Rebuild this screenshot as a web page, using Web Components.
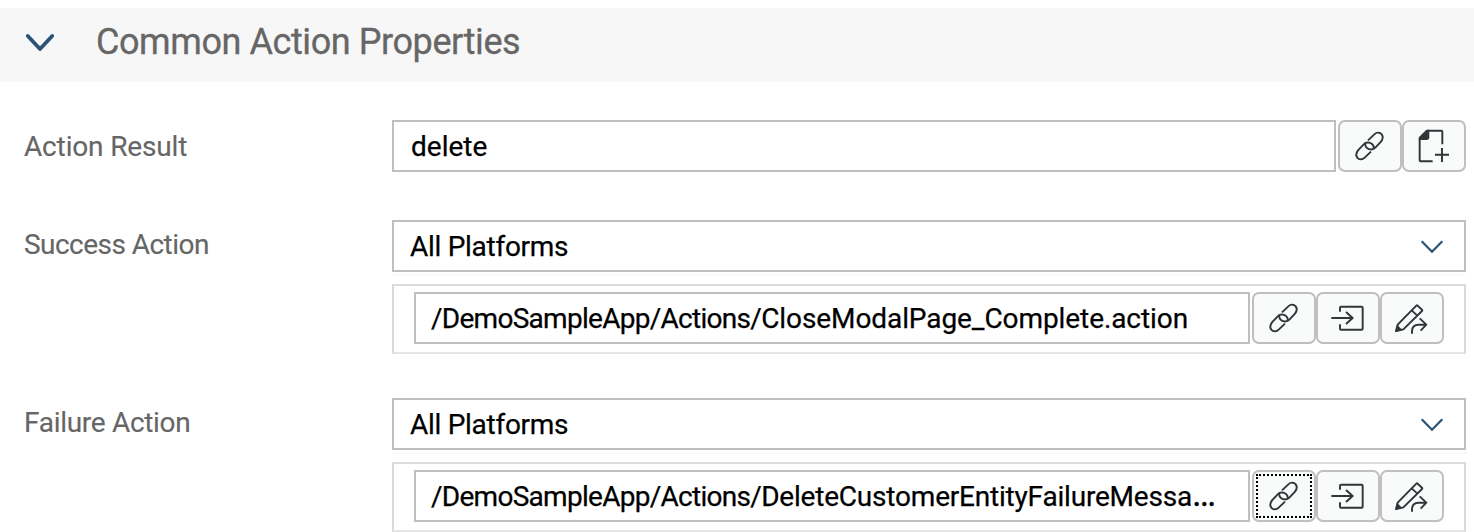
<!DOCTYPE html>
<html lang="en">
<head>
<meta charset="utf-8">
<title>Common Action Properties</title>
<style>
body{margin:0;background:#fff;font-family:Roboto,"Open Sans",sans-serif;overflow:hidden}
</style>
</head>
<body>
<property-panel></property-panel>
<script>
function define(name, html, setup) {
  const template = document.createElement('template');
  template.innerHTML = html;
  customElements.define(name, class extends HTMLElement {
    constructor() {
      super();
      this.attachShadow({mode: 'open'}).appendChild(template.content.cloneNode(true));
    }
    connectedCallback() { if (setup) setup(this, this.shadowRoot); }
  });
}

// Button icons share a 192 x 156 grid, three units per pixel.
const icons = {
  link: '<path d="M90 61 109 43C117 35 127 38 130 42C136 48 134 58 129 65L112 83C105 91 93 89 87 84C82 80 81 75 82 69M99 95 80 113C72 121 62 118 59 114C53 108 55 98 60 91L77 73C84 65 96 67 102 72C107 76 108 81 107 87"/>',
  create: '<path d="M53 54V121Q53 124 56 124H92M76 32H118Q121 32 121 35V73M99 104H141M120 84V126"/><path fill="#32363a" stroke="none" d="M50.500 60V52L73 29.500H82V51Q82 60 74 60Z"/>',
  enter: '<path d="M72 59V47Q72 44 75 44H137Q140 44 140 47V110Q140 113 137 113H75Q72 113 72 110V97M46 78H109M90 60 110 78 90 96"/>',
  edit: '<path d="M48 117 53 98 109 41Q111 39 113 41L126 53Q128 55 126 57L70 112ZM95 55 112 71M96 125V118Q96 98 116 98H139M119 79 139 98 122 116"/><path fill="#32363a" stroke="none" d="M46 120 51 98 67 114Z"/>'
};

define('icon-button', `
<style>
:host{display:block;box-sizing:border-box;flex:none;width:64px;height:52px;border:2px solid #bfbfbf;border-radius:7px;background:#f9fafa}
svg{display:block;box-sizing:border-box;margin:-2px;width:64px;height:52px;fill:none;stroke:#32363a;stroke-width:5.800;stroke-linecap:butt;stroke-linejoin:round}
:host([focused]) svg{margin:2px;width:56px;height:44px;border:2px dotted #000}
</style><svg viewBox="0 0 192 156"></svg>`, (host, root) => {
  const svg = root.querySelector('svg');
  svg.innerHTML = icons[host.getAttribute('icon')];
  if (host.hasAttribute('focused')) svg.setAttribute('viewBox', '18 18 156 120');
});

define('text-field', `
<style>
:host{display:flex;align-items:center;box-sizing:border-box;flex:1;min-width:0;height:52px;border:2px solid #bfbfbf;background:#fff;padding:0 16px 0 17px;font-size:28px;line-height:33px;color:#000;white-space:nowrap}
span{letter-spacing:var(--track,0);-webkit-text-stroke:.25px #000}
</style><span><slot></slot></span>`);

define('select-field', `
<style>
:host{display:flex;align-items:center;justify-content:space-between;box-sizing:border-box;height:52px;border:2px solid #bfbfbf;background:#fff;padding:0 20px 0 16px;font-size:28px;color:#000}
span{letter-spacing:-.28px;-webkit-text-stroke:.25px #000}
svg{width:24px;height:16px;fill:none;stroke:#2b5272;stroke-width:2.200}
</style><span><slot></slot></span><svg viewBox="0 0 24 16"><path d="M1.700 3.300 12 13.800 22.300 3.300"/></svg>`);

define('field-group', `
<style>
:host{display:flex;box-sizing:border-box;height:70px;margin-top:8px;padding:6px 20px;border:2px solid;border-color:#dcdcdc #d9d9d9 #e5e5e5}
</style><slot></slot>`);

define('section-header', `
<style>
:host{display:flex;align-items:center;box-sizing:border-box;height:74px;margin-top:8px;padding:0 24px;background:#f7f7f7;color:#666;font-size:36px}
svg{flex:none;width:32px;height:24px;margin:-6px 40px 0 0;fill:none;stroke:#2b5272;stroke-width:3.800;stroke-linecap:round;stroke-linejoin:round}
span{letter-spacing:-.42px;padding-bottom:6px;-webkit-text-stroke:.3px #666}
</style><svg viewBox="0 0 32 24"><path d="M3.800 6 16 19 28.200 6"/></svg><span><slot></slot></span>`);

define('form-row', `
<style>
:host{display:grid;grid-template-columns:368px minmax(0,1fr);align-items:start;padding:0 8px 0 24px}
.label{font-size:28px;line-height:52px;color:#666;letter-spacing:var(--label-track,0);margin-top:var(--label-top,0);-webkit-text-stroke:.15px #666}
</style><div class="label"></div><div><slot></slot></div>`, (host, root) => {
  root.querySelector('.label').textContent = host.getAttribute('label');
});

define('property-panel', `
<style>
:host{display:block;width:1474px;height:532px;overflow:hidden}
.line{display:flex}
text-field{margin-right:2px}
field-group text-field{padding-left:15px}
.rows{display:flex;flex-direction:column;padding-top:38px}
.r{--label-track:-.15px;--label-top:1px}
.s{margin-top:47px;--label-top:-1px;--label-track:-.54px}
.f{margin-top:44px;--label-top:-1px;--label-track:-.3px}
.folder{letter-spacing:-.72px}
.close{letter-spacing:-.08px}
.delete{letter-spacing:-.2px}
.more{font-size:36px;line-height:28px;letter-spacing:0}
.rule{height:2px;margin-top:2px;background:#fafafa}
</style>
<section-header>Common Action Properties</section-header>
<div class="rows">
<form-row class="r" label="Action Result"><div class="line"><text-field>delete</text-field><icon-button icon="link"></icon-button><icon-button icon="create"></icon-button></div></form-row>
<form-row class="s" label="Success Action"><select-field>All Platforms</select-field><div class="rule"></div>
<field-group><text-field><span class="folder">/DemoSampleApp/Actions/</span><span class="close">CloseModalPage_Complete.action</span></text-field><icon-button icon="link"></icon-button><icon-button icon="enter"></icon-button><icon-button icon="edit"></icon-button></field-group></form-row>
<form-row class="f" label="Failure Action"><select-field>All Platforms</select-field><div class="rule"></div>
<field-group><text-field><span class="folder">/DemoSampleApp/Actions/</span><span class="delete">DeleteCustomerEntityFailureMessa<span class="more">…</span></span></text-field><icon-button icon="link" focused></icon-button><icon-button icon="enter"></icon-button><icon-button icon="edit"></icon-button></field-group></form-row>
</div>`);
</script>
</body>
</html>
